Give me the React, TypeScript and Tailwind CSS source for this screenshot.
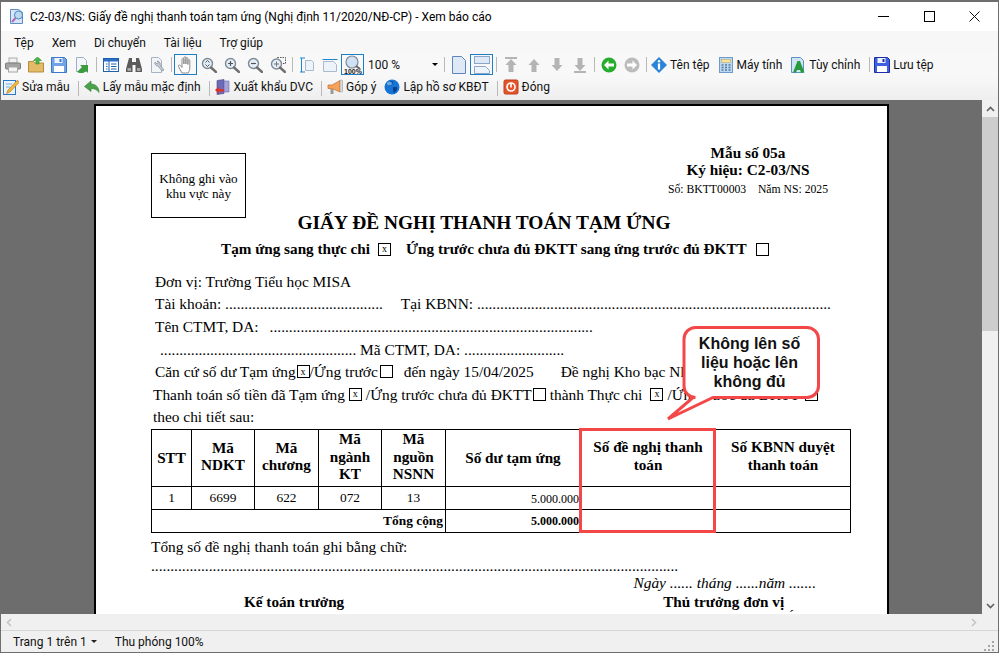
import type { ReactNode } from 'react';

const UI = 'font-["Roboto","Noto_Sans",sans-serif] text-[12px] text-[#111]';
const SERIF = 'font-["Liberation_Serif","Times_New_Roman",serif]';

function Svg({ children }: { children: ReactNode }) {
  return (
    <svg width="16" height="16" viewBox="0 0 16 16" className="block shrink-0">
      {children}
    </svg>
  );
}

const PrintIcon = () => (
  <Svg>
    <rect x="4" y="1" width="8" height="5" fill="#f2f2f2" stroke="#aaa" />
    <rect x="0.5" y="6" width="15" height="6" rx="1" fill="#a3a3a3" stroke="#7f7f7f" />
    <rect x="3.5" y="10" width="9" height="5" fill="#f4f4f4" stroke="#a5a5a5" />
  </Svg>
);
const FolderIcon = () => (
  <Svg>
    <path d="M0.5 4.5h5l1.5 1.5h8.5v9h-15z" fill="#e3bb68" stroke="#b58d3e" />
    <path d="M8 7V3.5H5.5L9.5 0l4 3.5H11V7z" fill="#4fb548" stroke="#2c8a2b" strokeWidth="0.6" />
  </Svg>
);
const SaveIcon = ({ dark }: { dark?: boolean }) => (
  <Svg>
    <path
      d="M0.5 0.5h13l2 2v13h-15z"
      fill={dark ? '#3d5fe0' : '#6ea3e6'}
      stroke={dark ? '#1c2fa8' : '#3d78c6'}
    />
    <rect x="3.5" y="1" width="8" height="5" fill="#eef4fb" />
    <rect x="3" y="9" width="10" height="6" fill="#fff" />
    <rect x="8.5" y="2" width="2" height="3" fill={dark ? '#1c2fa8' : '#3d78c6'} />
  </Svg>
);
const ExportIcon = () => (
  <Svg>
    <path d="M2.5 0.5h7l3 3v11h-10z" fill="#f3f6fa" stroke="#9fb0c4" />
    <path d="M3 15l5-5-2-2h8v8l-2-2-4 3z" fill="#3c9a3f" />
  </Svg>
);
const TableIcon = () => (
  <Svg>
    <rect x="0.5" y="1.5" width="15" height="13" fill="#fff" stroke="#1f5fae" />
    <rect x="1" y="2" width="14" height="2.5" fill="#2a6fc4" />
    <path d="M6 4v10M3 7h1.5M3 9.5h1.5M3 12h1.5M8 7h5.5M8 9.5h5.5M8 12h5.5" stroke="#1f5fae" />
  </Svg>
);
const BinocularsIcon = () => (
  <Svg>
    <path d="M3 1h3v4h4V1h3l3 11v3H9.5V8h-3v7H0v-3z" fill="#5b5b5b" />
    <rect x="1.5" y="11" width="3.5" height="3" fill="#a8a8a8" />
    <rect x="11" y="11" width="3.5" height="3" fill="#a8a8a8" />
  </Svg>
);
const DocWrenchIcon = () => (
  <Svg>
    <path d="M2.5 0.5h7l3 3v12h-10z" fill="#f2f4f8" stroke="#a7b2c2" />
    <path d="M6 5a3 3 0 0 0 3 4l4 5 2-1-4-5a3 3 0 0 0-3-4l1.5 2-1.5 1z" fill="#c9ced6" stroke="#7d8694" strokeWidth="0.7" />
  </Svg>
);
const HandIcon = () => (
  <svg width="20" height="20" viewBox="0 0 20 20" className="block">
    <path
      d="M6 18 2.5 11.5c-.6-1.4 1-2.2 1.9-1L6 12.5V4.5c0-1.4 1.9-1.4 1.9 0V9V2.8c0-1.4 2-1.4 2 0V9V3.6c0-1.4 2-1.4 2 0V9.5V5.6c0-1.3 1.9-1.3 1.9 0v7.4c0 2-.8 3.4-1.6 5z"
      fill="#fff"
      stroke="#8c8c8c"
      strokeWidth="1"
    />
  </svg>
);
function Lens({ mark }: { mark: 'fit' | 'plus' | 'minus' | 'area' }) {
  return (
    <Svg>
      {mark === 'area' ? <rect x="7.5" y="0.5" width="8" height="6" fill="none" stroke="#555" strokeDasharray="1.5 1" /> : null}
      <circle cx="6.5" cy={mark === 'area' ? 7 : 6.5} r="5" fill="#e4eef8" stroke="#7f8a96" strokeWidth="1.4" />
      <path d="M10 10.5l5 4.5" stroke="#6f6f6f" strokeWidth="2.4" strokeLinecap="round" />
      {mark === 'plus' ? <path d="M4 6.5h5M6.5 4v5" stroke="#555" strokeWidth="1.2" /> : null}
      {mark === 'minus' ? <path d="M4 6.5h5" stroke="#555" strokeWidth="1.2" /> : null}
      {mark === 'fit' ? <path d="M4.5 5.5l2-2 2 2M4.5 7.5l2 2 2-2" fill="none" stroke="#555" /> : null}
      {mark === 'area' ? <path d="M6.5 4.5v5M4 7h5" stroke="#777" /> : null}
    </Svg>
  );
}
const FitHeightIcon = () => (
  <Svg>
    <path d="M1 1h5M1 15h5M2.5 1v14" stroke="#1c86d1" />
    <path d="M6.5 3.5h6l2 2v8h-8z" fill="#eef3f9" stroke="#a9bad0" />
  </Svg>
);
const FitWidthIcon = () => (
  <Svg>
    <path d="M0.5 2.5h15" stroke="#1c86d1" />
    <path d="M1.5 4.5h10l3 3v7h-13z" fill="#eef3f9" stroke="#a9bad0" />
  </Svg>
);
const ActualSizeIcon = () => (
  <svg width="20" height="20" viewBox="0 0 20 20" className="block">
    <circle cx="9" cy="7" r="6" fill="#cfe2f5" stroke="#7f8a96" strokeWidth="1.2" />
    <path d="M13 11l4 3" stroke="#666" strokeWidth="2" />
    <text x="10" y="19" textAnchor="middle" className="font-['Liberation_Sans',sans-serif] text-[7px] font-bold" fill="#222">
      100%
    </text>
  </svg>
);
const PageIcon = () => (
  <svg width="14" height="18" viewBox="0 0 14 18" className="block">
    <path d="M0.5 0.5h9l4 4v13h-13z" fill="#dfe9f6" stroke="#5d86c0" />
  </svg>
);
const TwoPageIcon = () => (
  <svg width="18" height="18" viewBox="0 0 18 18" className="block">
    <rect x="1.5" y="0.5" width="15" height="7" fill="#dfe9f6" stroke="#8aa6cb" />
    <path d="M1.5 10.5h11l4 4v3h-15z" fill="#eef3f9" stroke="#8aa6cb" />
  </svg>
);
function ArrowIcon({ dir, bar }: { dir: 'up' | 'down'; bar?: boolean }) {
  return (
    <Svg>
      <g transform={dir === 'down' ? 'rotate(180 8 8)' : undefined}>
        <path d="M8 2 2.5 8H5.5v7h5V8h3z" fill="#b4b4b4" />
        {bar ? <rect x="2" y="0" width="12" height="2" fill="#b4b4b4" /> : null}
      </g>
    </Svg>
  );
}
function RoundArrow({ green }: { green?: boolean }) {
  return (
    <Svg>
      <circle cx="8" cy="8" r="7.5" fill={green ? '#27ad2e' : '#bcbcbc'} />
      <path
        d={green ? 'M3 8l4.5-4.5V6.5H13v3H7.5v3z' : 'M13 8 8.5 3.5V6.5H3v3h5.5v3z'}
        fill="#fff"
      />
    </Svg>
  );
}
const InfoIcon = () => (
  <Svg>
    <path d="M8 0l8 8-8 8-8-8z" fill="#2b84d8" />
    <circle cx="8" cy="4.2" r="1.2" fill="#fff" />
    <rect x="6.9" y="6.5" width="2.2" height="6" fill="#fff" />
  </Svg>
);
const CalcIcon = () => (
  <Svg>
    <rect x="1.5" y="0.5" width="13" height="15" fill="#bcd9f2" stroke="#6d9ccc" />
    <rect x="3.5" y="2.5" width="9" height="3" fill="#fbe39a" stroke="#b2a15f" strokeWidth="0.5" />
    <path d="M3.5 8h2M7 8h2M10.5 8h2M3.5 10.5h2M7 10.5h2M10.5 10.5h2M3.5 13h2M7 13h2M10.5 13h2" stroke="#56799f" strokeWidth="1.4" />
  </Svg>
);
const CustomIcon = () => (
  <Svg>
    <path d="M1.5 0.5h9l3 3v12h-12z" fill="#cfe5f7" stroke="#5f92c4" />
    <path d="M7.5 4 3 15.5h3l1-2.5h3l1 2.5h3.5L10 4z" fill="#279a3c" />
  </Svg>
);
const EditIcon = () => (
  <Svg>
    <rect x="0.5" y="1.5" width="12" height="14" fill="#e9f3fc" stroke="#2a79c9" />
    <path d="M3 5h6M3 8h4" stroke="#7aa9d9" />
    <path d="M14.5 1 5 11l-1.5 3.5L7 13 16 3.5z" fill="#f1b93a" stroke="#b86f19" strokeWidth="0.6" />
  </Svg>
);
const UndoIcon = () => (
  <Svg>
    <path d="M7 2 0.5 7.5 7 12.5V9.5c3.5 0 6 1 8 4 0-5-3-8.5-8-8.5z" fill="#4aa24a" stroke="#2f7b30" strokeWidth="0.6" />
  </Svg>
);
const DvcIcon = () => (
  <Svg>
    <path d="M2 1.5l7-1v14l-7 1z" fill="#6d6ab8" stroke="#4b4889" strokeWidth="0.6" />
    <path d="M9 2h5v11H9z" fill="#a5a2d6" stroke="#6d6ab8" strokeWidth="0.6" />
    <path d="M0 11l4-3.5V10h5v2.5H4V15z" fill="#d8342c" />
  </Svg>
);
const FeedbackIcon = () => (
  <Svg>
    <path d="M1 6h4l8-4.5v11.5L5 9.5H1z" fill="#f7a15a" stroke="#c46f2c" strokeWidth="0.7" />
    <rect x="13" y="1" width="2.5" height="12" rx="1" fill="#dddddd" stroke="#8a8a8a" strokeWidth="0.5" />
    <rect x="3.5" y="10" width="3" height="5" fill="#9a9a9a" />
  </Svg>
);
const GlobeIcon = () => (
  <Svg>
    <circle cx="8" cy="8" r="7.5" fill="#1574d4" />
    <path d="M4 3c2-1 4-1 5 0l-1 3-3 1zM9 8l4 0 0 3-3 3-1-2z" fill="#0c3f8f" />
    <ellipse cx="5.5" cy="4.5" rx="2.5" ry="2" fill="#7cc0f2" opacity="0.8" />
  </Svg>
);
const CloseIcon = () => (
  <Svg>
    <rect x="1" y="1" width="14" height="14" rx="1.5" fill="#e5552d" stroke="#bd3f1c" />
    <circle cx="8" cy="8" r="4" fill="none" stroke="#fff" strokeWidth="1.6" />
    <path d="M8 4v4.5" stroke="#fff" strokeWidth="1.6" />
  </Svg>
);

function Tool({ active, children }: { active?: boolean; children: ReactNode }) {
  return (
    <div
      className={`flex h-[21px] w-[23px] shrink-0 items-center justify-center ${active ? 'border-[1.5px] border-[#1c7fc4]' : ''}`}
    >
      {children}
    </div>
  );
}

function Sep() {
  return (
    <div className="flex h-[21px] w-[6px] shrink-0 items-center justify-center">
      <div className="h-[15px] w-px bg-[#b9b9b9]" />
    </div>
  );
}

function Labeled({ icon, label }: { icon: ReactNode; label: string }) {
  return (
    <div className="flex shrink-0 items-center gap-[3px] pl-[2px] pr-[6px]">
      {icon}
      <span className="whitespace-nowrap">{label}</span>
    </div>
  );
}

function Check({ mark, className = '' }: { mark?: boolean; className?: string }) {
  return (
    <span
      className={`inline-flex h-[13px] w-[13px] shrink-0 items-center justify-center border border-black text-[10px] leading-none font-normal ${className}`}
    >
      {mark ? 'x' : ''}
    </span>
  );
}

function Line({ className = '', children }: { className?: string; children: ReactNode }) {
  return (
    <div className={`flex h-[22.6px] items-center whitespace-pre text-[15.4px] ${className}`}>{children}</div>
  );
}

function PaperDoc() {
  return (
    <div className={`h-[560px] w-[795px] shrink-0 border-2 border-b-0 border-black bg-white pl-[55px] text-black ${SERIF}`}>
      <div className="flex h-[104px] w-[700px] justify-between pt-[38px]">
        <div className="mt-[9px] flex h-[65px] w-[95px] flex-col items-center justify-center border border-black text-[13.2px] leading-[15px]">
          <span>Không ghi vào</span>
          <span>khu vực này</span>
        </div>
        <div className="mr-[3px] w-[200px] text-center">
          <div className="text-[15.3px] font-bold leading-[17px]">Mẫu số 05a</div>
          <div className="text-[15.3px] font-bold leading-[17px]">Ký hiệu: C2-03/NS</div>
          <div className="mt-[3px] whitespace-pre text-[11.7px] leading-[18px]">Số: BKTT00003    Năm NS: 2025</div>
        </div>
      </div>
      <div className="h-[26px] w-[666px] text-center text-[19.4px] font-bold leading-[26px]">
        GIẤY ĐỀ NGHỊ THANH TOÁN TẠM ỨNG
      </div>
      <div className="flex h-[26px] items-center pl-[70px] text-[15.2px] font-bold">
        <span>Tạm ứng sang thực chi</span>
        <Check mark className="ml-[8px]" />
        <span className="ml-[15px]">Ứng trước chưa đủ ĐKTT sang ứng trước đủ ĐKTT</span>
        <Check className="ml-[9px]" />
      </div>
      <div className="h-[8px]" />
      <Line className="pl-[4px]">Đơn vị: Trường Tiểu học MISA</Line>
      <Line className="pl-[4px]">
        <span>Tài khoản: {'.'.repeat(41)}</span>
        <span className="ml-[18px]">Tại KBNN: {'.'.repeat(92)}</span>
      </Line>
      <Line className="pl-[4px]">
        <span>Tên CTMT, DA:</span>
        <span className="ml-[11px]">{'.'.repeat(84)}</span>
      </Line>
      <Line className="pl-[9px]">
        {'.'.repeat(51)} Mã CTMT, DA: {'.'.repeat(26)}
      </Line>
      <Line className="pl-[4px]">
        <span>Căn cứ số dư Tạm ứng</span>
        <Check mark className="ml-[1px]" />
        <span>/Ứng trước</span>
        <Check className="ml-[2px]" />
        <span className="ml-[11px]">đến ngày 15/04/2025</span>
        <span className="ml-[27px]">Đề nghị Kho bạc Nhà nước</span>
      </Line>
      <Line className="pl-[2px]">
        <span>Thanh toán số tiền đã Tạm ứng</span>
        <Check mark className="ml-[4px]" />
        <span className="ml-[4px]">/Ứng trước chưa đủ ĐKTT</span>
        <Check className="ml-[1px]" />
        <span className="ml-[4px]">thành Thực chi</span>
        <Check mark className="ml-[8px]" />
        <span className="ml-[4px]">/Ứng trước đủ ĐKTT</span>
        <Check className="ml-[5px]" />
      </Line>
      <Line className="pl-[2px]">theo chi tiết sau:</Line>
      <table className="mt-px w-[700px] table-fixed border-collapse border border-black text-center">
        <colgroup>
          <col className="w-[40px]" />
          <col className="w-[63px]" />
          <col className="w-[64px]" />
          <col className="w-[63px]" />
          <col className="w-[64px]" />
          <col className="w-[135px]" />
          <col className="w-[135px]" />
          <col className="w-[135px]" />
        </colgroup>
        <thead>
          <tr className="h-[56px] text-[15.2px] leading-[17.5px]">
            <th className="border border-black font-bold">STT</th>
            <th className="border border-black pb-[3px] font-bold">Mã<br />NDKT</th>
            <th className="border border-black pb-[3px] font-bold">Mã<br />chương</th>
            <th className="border border-black pb-[3px] font-bold">Mã<br />ngành<br />KT</th>
            <th className="border border-black pb-[3px] font-bold">Mã<br />nguồn<br />NSNN</th>
            <th className="border border-black font-bold">Số dư tạm ứng</th>
            <th className="border border-black px-[4px] font-bold">
              <div className="-mt-[4px]">Số đề nghị thanh<br />toán</div>
            </th>
            <th className="border border-black px-[4px] font-bold">
              <div className="-mt-[4px]">Số KBNN duyệt<br />thanh toán</div>
            </th>
          </tr>
        </thead>
        <tbody className="text-[13.4px]">
          <tr className="h-[23px]">
            <td className="border border-black">1</td>
            <td className="border border-black">6699</td>
            <td className="border border-black">622</td>
            <td className="border border-black">072</td>
            <td className="border border-black">13</td>
            <td className="border border-black pr-[1px] pt-[3px] text-right text-[12px]">5.000.000</td>
            <td className="border border-black" />
            <td className="border border-black" />
          </tr>
          <tr className="h-[23px] font-bold">
            <td colSpan={5} className="border border-black pr-[2px] text-right">Tổng cộng</td>
            <td className="border border-black pr-[1px] text-right text-[12px]">5.000.000</td>
            <td className="border border-black" />
            <td className="border border-black" />
          </tr>
        </tbody>
      </table>
      <Line className="mt-[3px]">Tổng số đề nghị thanh toán ghi bằng chữ:</Line>
      <div className="flex h-[14px] items-center whitespace-pre text-[15.4px]">{'.'.repeat(137)}</div>
      <div className="h-[21px] w-[665px] text-right text-[15.4px] italic leading-[21px]">
        Ngày ...... tháng ......năm .......
      </div>
      <div className="flex h-[20px] text-[15.2px] font-bold leading-[17px]">
        <span className="ml-[93px]">Kế toán trưởng</span>
        <span className="ml-[319px]">Thủ trưởng đơn vị</span>
        <span className="ml-[5px] mt-[13px] font-normal">´</span>
      </div>
    </div>
  );
}

export default function App() {
  return (
    <div className={`relative flex h-[653px] w-[999px] flex-col overflow-hidden border border-t-2 border-[#6e6e6e] bg-white ${UI}`}>
      <header className="flex h-[29px] shrink-0 items-center bg-white pl-[8px]">
        <svg width="16" height="17" viewBox="0 0 16 17" className="block">
          <path d="M1.5 1.5h8l4 3v11h-12z" fill="#d6e6f6" stroke="#5f8dc0" />
          <circle cx="9.5" cy="7" r="4" fill="#bcd9f2" stroke="#4f86c6" />
          <path d="M6.5 10 3 14" stroke="#b46ab6" strokeWidth="2" />
        </svg>
        <span className="ml-[5px] whitespace-nowrap text-[12px] text-black">
          C2-03/NS: Giấy đề nghị thanh toán tạm ứng (Nghị định 11/2020/NĐ-CP) - Xem báo cáo
        </span>
        <div className="ml-auto flex h-full pr-[2px]">
          <div className="flex w-[46px] items-center justify-center">
            <div className="h-px w-[11px] bg-black" />
          </div>
          <div className="flex w-[46px] items-center justify-center">
            <div className="h-[11px] w-[11px] border border-black" />
          </div>
          <div className="flex w-[44px] items-center justify-center">
            <svg width="11" height="11" viewBox="0 0 11 11" className="block">
              <path d="M0.5 0.5l10 10M10.5 0.5l-10 10" stroke="#111" />
            </svg>
          </div>
        </div>
      </header>

      <nav className="flex h-[22px] shrink-0 items-center bg-[#f7f7f7] pl-[4px] pt-px">
        {['Tệp', 'Xem', 'Di chuyển', 'Tài liệu', 'Trợ giúp'].map((item) => (
          <span key={item} className="px-[9px]">{item}</span>
        ))}
      </nav>

      <div className="flex h-[23px] shrink-0 items-center bg-[#f8f8f8]">
        <Tool><PrintIcon /></Tool>
        <Tool><FolderIcon /></Tool>
        <Tool><SaveIcon /></Tool>
        <Tool><ExportIcon /></Tool>
        <Sep />
        <Tool><TableIcon /></Tool>
        <Tool><BinocularsIcon /></Tool>
        <Tool><DocWrenchIcon /></Tool>
        <Sep />
        <Tool active><HandIcon /></Tool>
        <Tool><Lens mark="fit" /></Tool>
        <Tool><Lens mark="plus" /></Tool>
        <Tool><Lens mark="minus" /></Tool>
        <Tool><Lens mark="area" /></Tool>
        <Sep />
        <Tool><FitHeightIcon /></Tool>
        <Tool><FitWidthIcon /></Tool>
        <Tool active><ActualSizeIcon /></Tool>
        <div className="flex h-[21px] w-[77px] shrink-0 items-center justify-between pl-[4px] pr-[3px]">
          <span>100 %</span>
          <div className="h-0 w-0 border-x-[3px] border-t-[3px] border-x-transparent border-t-black" />
        </div>
        <Sep />
        <Tool><PageIcon /></Tool>
        <Tool active><TwoPageIcon /></Tool>
        <Sep />
        <Tool><ArrowIcon dir="up" bar /></Tool>
        <Tool><ArrowIcon dir="up" /></Tool>
        <Tool><ArrowIcon dir="down" /></Tool>
        <Tool><ArrowIcon dir="down" bar /></Tool>
        <Sep />
        <Tool><RoundArrow green /></Tool>
        <Tool><RoundArrow /></Tool>
        <Sep />
        <Labeled icon={<InfoIcon />} label="Tên tệp" />
        <Labeled icon={<CalcIcon />} label="Máy tính" />
        <Labeled icon={<CustomIcon />} label="Tùy chỉnh" />
        <Sep />
        <Labeled icon={<SaveIcon dark />} label="Lưu tệp" />
      </div>

      <div className="flex h-[24px] shrink-0 items-start bg-gradient-to-b from-[#f8f8f8] to-[#eeeeee] pt-[2px]">
        <Labeled icon={<EditIcon />} label="Sửa mẫu" />
        <Sep />
        <Labeled icon={<UndoIcon />} label="Lấy mẫu mặc định" />
        <Sep />
        <Labeled icon={<DvcIcon />} label="Xuất khẩu DVC" />
        <Sep />
        <Labeled icon={<FeedbackIcon />} label="Góp ý" />
        <Labeled icon={<GlobeIcon />} label="Lập hồ sơ KBĐT" />
        <Sep />
        <Labeled icon={<CloseIcon />} label="Đóng" />
      </div>

      <div className="flex min-h-0 flex-1">
        <main className="relative min-w-0 flex-1 overflow-hidden bg-[#6d6d6d] pl-[93px] pt-[4px]">
          <PaperDoc />
          <div className="absolute left-[578px] top-[328px] h-[105px] w-[137px] border-[3px] border-[#f44848]" />
          <svg width="160" height="100" viewBox="0 0 160 100" className="absolute left-[662px] top-[224px]">
            <path
              d="M32.5 3.5H144a11.5 11.5 0 0 1 11.5 11.5V62a11.5 11.5 0 0 1-11.5 11.5H50L5 95 30 73.5H32.5a11.5 11.5 0 0 1-11.5-11.5V15A11.5 11.5 0 0 1 32.5 3.5z"
              fill="#fff"
              stroke="#f44848"
              strokeWidth="3"
            />
          </svg>
          <div className="absolute left-[679px] top-[234px] w-[139px] text-center font-['Liberation_Sans',Arial,sans-serif] text-[16px] font-bold leading-[19px] text-[#111]">
            Không lên số<br />liệu hoặc lên<br />không đủ
          </div>
        </main>
        <aside className="flex w-[16px] shrink-0 flex-col bg-[#f0f0f0]">
          <div className="flex h-[17px] items-center justify-center text-[#555]">
            <svg width="9" height="6" viewBox="0 0 9 6" className="block"><path d="M1 5l3.5-3.5L8 5" fill="none" stroke="#606060" strokeWidth="1.6" /></svg>
          </div>
          <div className="h-[214px] bg-[#cdcdcd]" />
          <div className="flex-1" />
          <div className="flex h-[17px] items-center justify-center">
            <svg width="9" height="6" viewBox="0 0 9 6" className="block"><path d="M1 1l3.5 3.5L8 1" fill="none" stroke="#606060" strokeWidth="1.6" /></svg>
          </div>
        </aside>
      </div>

      <div className="flex h-[17px] shrink-0 items-center justify-between border-b border-[#d6d6d6] bg-[#f0f0f0] pl-[5px] pr-[21px]">
        <svg width="6" height="9" viewBox="0 0 6 9" className="block"><path d="M5 1 1.5 4.5 5 8" fill="none" stroke="#c4c4c4" strokeWidth="1.6" /></svg>
        <svg width="6" height="9" viewBox="0 0 6 9" className="block"><path d="M1 1l3.5 3.5L1 8" fill="none" stroke="#c4c4c4" strokeWidth="1.6" /></svg>
      </div>

      <footer className="flex h-[21px] shrink-0 items-center bg-[#f0f0f0] pl-[12px]">
        <span>Trang 1 trên 1</span>
        <div className="ml-[4px] h-0 w-0 border-x-[3px] border-t-[3px] border-x-transparent border-t-[#222]" />
        <span className="ml-[18px]">Thu phóng 100%</span>
        <svg width="11" height="11" viewBox="0 0 11 11" className="ml-auto mr-[3px] block self-end" fill="#a6a6a6">
          <rect x="8" y="0" width="2" height="2" />
          <rect x="4" y="4" width="2" height="2" />
          <rect x="8" y="4" width="2" height="2" />
          <rect x="0" y="8" width="2" height="2" />
          <rect x="4" y="8" width="2" height="2" />
          <rect x="8" y="8" width="2" height="2" />
        </svg>
      </footer>
    </div>
  );
}
